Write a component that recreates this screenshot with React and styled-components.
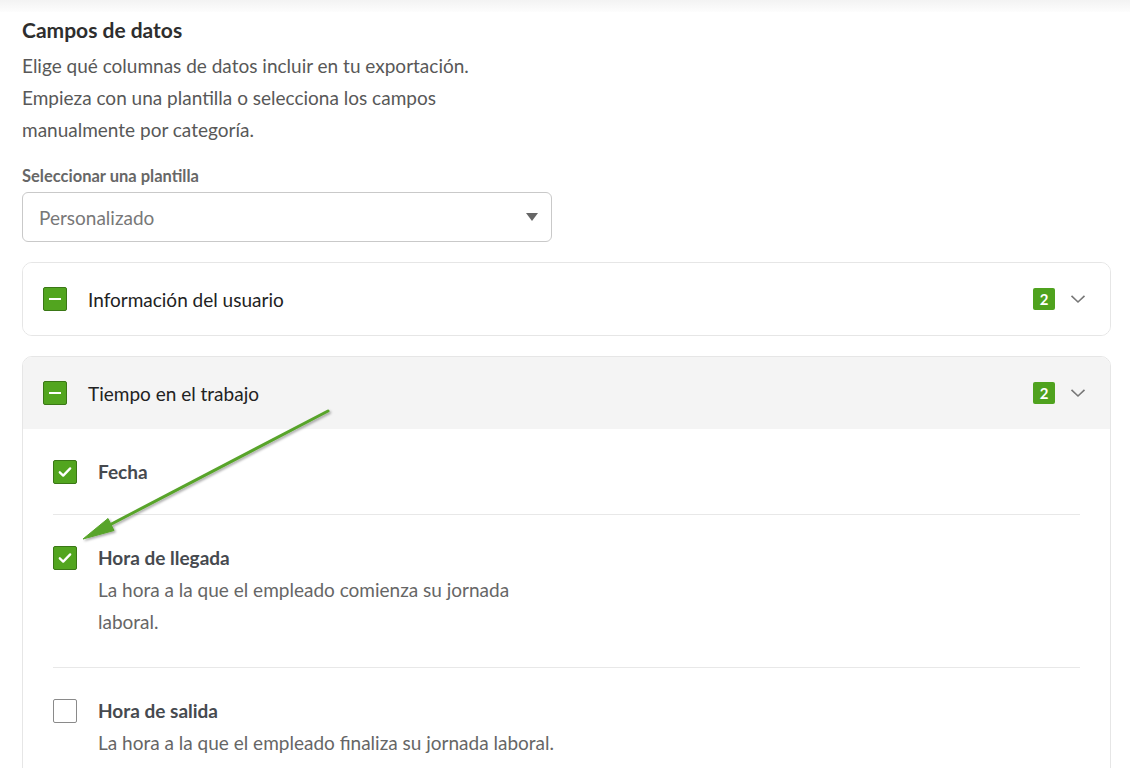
import React from 'react';
import styled, { createGlobalStyle } from 'styled-components';

const GlobalStyle = createGlobalStyle`
  html, body {
    margin: 0;
    padding: 0;
    background: #ffffff;
  }
  body {
    font-family: Lato, "Liberation Sans", sans-serif;
    -webkit-font-smoothing: antialiased;
  }
  * {
    box-sizing: border-box;
  }
`;

const Wrapper = styled.div`
  position: relative;
  width: 1130px;
  min-height: 768px;
  overflow: hidden;
`;

const TopShade = styled.div`
  height: 12px;
  background: linear-gradient(#f3f3f3, #fdfdfd);
`;

const Page = styled.div`
  padding: 4px 19px 0 22px;
`;

const Title = styled.h2`
  margin: 0;
  font-size: 21px;
  line-height: 28px;
  font-weight: 700;
  color: #2e2e2e;
`;

const Intro = styled.p`
  margin: 6px 0 0;
  max-width: 470px;
  font-size: 19px;
  line-height: 32px;
  color: #585858;
`;

const FieldLabel = styled.label`
  display: block;
  margin-top: 20px;
  font-size: 16.5px;
  line-height: 20px;
  font-weight: 700;
  color: #676767;
`;

const SelectBox = styled.div`
  margin-top: 6px;
  width: 530px;
  height: 50px;
  padding: 0 13px 0 16px;
  border: 1px solid #c9c9c9;
  border-radius: 6px;
  display: flex;
  align-items: center;
  justify-content: space-between;
  font-size: 19px;
  color: #787878;
`;

const Caret = styled.span`
  width: 0;
  height: 0;
  border-left: 6.5px solid transparent;
  border-right: 6.5px solid transparent;
  border-top: 8px solid #666;
`;

const Card = styled.section`
  margin-top: 20px;
  border: 1px solid #e6e6e6;
  border-radius: 10px;
  overflow: hidden;
`;

const CardHeader = styled.div`
  height: 72px;
  padding: 0 20px;
  display: flex;
  align-items: center;
  gap: 21px;
  background: ${p => (p.$open ? '#f4f4f4' : '#ffffff')};
`;

const CardTitle = styled.span`
  flex: 1;
  font-size: 19px;
  color: #222;
`;

const Badge = styled.span`
  width: 22px;
  height: 22px;
  border-radius: 2px;
  background: #4fa21e;
  color: #fff;
  font-size: 15px;
  font-weight: 700;
  display: flex;
  align-items: center;
  justify-content: center;
`;

const Chevron = styled.span`
  width: 24px;
  margin-left: -10px;
  display: flex;
  justify-content: center;
`;

const Box = styled.span`
  flex: none;
  width: 24px;
  height: 24px;
  border-radius: 2px;
  display: flex;
  align-items: center;
  justify-content: center;
  background: ${p => (p.$on ? '#52a51f' : '#fff')};
  border: 1px solid ${p => (p.$on ? '#3a7716' : '#8a8a8a')};
`;

const Dash = styled.span`
  width: 12px;
  height: 2px;
  background: #fff;
`;

const CardBody = styled.div`
  padding: 0 30px;
`;

const Row = styled.div`
  display: flex;
  align-items: flex-start;
  gap: 21px;
  padding: 31px 0 30px;
  & + & {
    border-top: 1px solid #e8e8e8;
  }
`;

const RowText = styled.div`
  display: flex;
  flex-direction: column;
`;

const RowTitle = styled.span`
  font-size: 19px;
  line-height: 24px;
  font-weight: 700;
  color: #464a4f;
`;

const RowDesc = styled.span`
  max-width: 466px;
  font-size: 19px;
  line-height: 31.5px;
  margin-top: 4px;
  color: #666;
`;

const Overlay = styled.svg`
  position: absolute;
  left: 0;
  top: 0;
  pointer-events: none;
`;

const Check = () => (
  <svg width="16" height="16" viewBox="0 0 16 16">
    <path d="M2.8 8.3l3.4 3.3L13.2 4.4" fill="none" stroke="#fff" strokeWidth="2.3" strokeLinecap="round" strokeLinejoin="round" />
  </svg>
);

const Down = () => (
  <svg width="16" height="10" viewBox="0 0 16 10">
    <path d="M1.5 1.8L8 8l6.5-6.2" fill="none" stroke="#777" strokeWidth="1.6" />
  </svg>
);

const Checkbox = ({ state }) => (
  <Box $on={state !== 'off'}>
    {state === 'partial' && <Dash />}
    {state === 'on' && <Check />}
  </Box>
);

const fields = [
  { name: 'Fecha', on: true },
  { name: 'Hora de llegada', on: true, desc: 'La hora a la que el empleado comienza su jornada laboral.' },
  { name: 'Hora de salida', on: false, desc: 'La hora a la que el empleado finaliza su jornada laboral.' },
];

export default function App() {
  return (
    <Wrapper>
      <GlobalStyle />
      <TopShade />
      <Page>
        <Title>Campos de datos</Title>
        <Intro>
          Elige qué columnas de datos incluir en tu exportación. Empieza con una plantilla o selecciona los campos
          manualmente por categoría.
        </Intro>
        <FieldLabel>Seleccionar una plantilla</FieldLabel>
        <SelectBox>
          Personalizado
          <Caret />
        </SelectBox>

        <Card>
          <CardHeader>
            <Checkbox state="partial" />
            <CardTitle>Información del usuario</CardTitle>
            <Badge>2</Badge>
            <Chevron><Down /></Chevron>
          </CardHeader>
        </Card>

        <Card>
          <CardHeader $open>
            <Checkbox state="partial" />
            <CardTitle>Tiempo en el trabajo</CardTitle>
            <Badge>2</Badge>
            <Chevron><Down /></Chevron>
          </CardHeader>
          <CardBody>
            {fields.map(f => (
              <Row key={f.name}>
                <Checkbox state={f.on ? 'on' : 'off'} />
                <RowText>
                  <RowTitle>{f.name}</RowTitle>
                  {f.desc && <RowDesc>{f.desc}</RowDesc>}
                </RowText>
              </Row>
            ))}
          </CardBody>
        </Card>
      </Page>

      <Overlay width="1130" height="768">
        <defs>
          <filter id="arrowShadow" x="-20%" y="-20%" width="140%" height="140%">
            <feDropShadow dx="1.5" dy="1.5" stdDeviation="1.2" floodColor="#000" floodOpacity="0.35" />
          </filter>
        </defs>
        <g filter="url(#arrowShadow)" fill="#58a42a" stroke="#58a42a">
          <line x1="328" y1="411" x2="100" y2="530" strokeWidth="3" strokeLinecap="round" />
          <polygon points="83,539 108,518.5 114,530.5" strokeWidth="1" strokeLinejoin="round" />
        </g>
      </Overlay>
    </Wrapper>
  );
}
